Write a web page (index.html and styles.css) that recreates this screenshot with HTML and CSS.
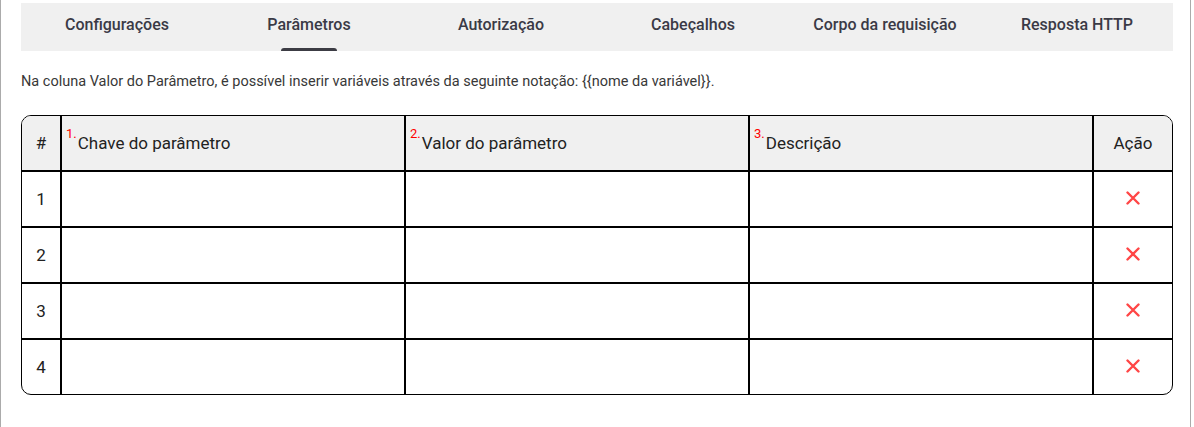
FILE: index.html
```html
<!DOCTYPE html>
<html lang="pt-BR">
<head>
    <meta charset="UTF-8">
    <meta name="viewport" content="width=device-width, initial-scale=1.0">
    <title>Parâmetros da requisição</title>
    <link rel="stylesheet" href="styles.css">
</head>
<body>

<div class="panel">
    <div class="tabs">
        <div class="tab">Configurações</div>
        <div class="tab active">Parâmetros</div>
        <div class="tab">Autorização</div>
        <div class="tab">Cabeçalhos</div>
        <div class="tab">Corpo da requisição</div>
        <div class="tab">Resposta HTTP</div>
    </div>

    <p class="note">Na coluna Valor do Parâmetro, é possível inserir variáveis através da seguinte notação: {{nome da variável}}.</p>

    <div class="table-wrap">
        <table class="params">
            <colgroup>
                <col class="col-num">
                <col class="col-text">
                <col class="col-text">
                <col class="col-text">
                <col class="col-action">
            </colgroup>
            <thead>
                <tr>
                    <th class="center">#</th>
                    <th><span class="order">1.</span>Chave do parâmetro</th>
                    <th><span class="order">2.</span>Valor do parâmetro</th>
                    <th><span class="order">3.</span>Descrição</th>
                    <th class="center">Ação</th>
                </tr>
            </thead>
            <tbody id="rows"></tbody>
        </table>
    </div>
</div>

<script>
    const rows = document.getElementById('rows');
    const removeIcon = '<svg width="14" height="14" viewBox="0 0 14 14"><path d="M1.5 1.5 L12.5 12.5 M12.5 1.5 L1.5 12.5" stroke="#ff4646" stroke-width="2.4" stroke-linecap="round"/></svg>';

    for (let i = 1; i <= 4; i++) {
        const tr = document.createElement('tr');
        tr.innerHTML = `<td class="center">${i}</td><td></td><td></td><td></td><td class="center"><span class="remove">${removeIcon}</span></td>`;
        rows.appendChild(tr);
    }
</script>

</body>
</html>
```

FILE: styles.css
```css
body {
    font-family: Roboto, "Noto Sans", sans-serif;
    margin: 0;
    background-color: #fff;
}
.panel {
    width: 1191px;
    height: 100vh;
    box-sizing: border-box;
    border-left: 1px solid #ababab;
    border-right: 1px solid #ababab;
    padding: 3px 17px 0 20px;
}
.tabs {
    display: grid;
    grid-template-columns: repeat(6, 1fr);
    background-color: #f0f0f0;
    height: 48px;
}
.tab {
    position: relative;
    text-align: center;
    padding-top: 12px;
    line-height: 20px;
    font-size: 16px;
    font-weight: 500;
    color: #3a3a46;
}
.tab.active::after {
    content: "";
    position: absolute;
    left: 50%;
    bottom: 0;
    width: 56px;
    height: 3px;
    margin-left: -28px;
    background-color: #3c3c44;
    border-radius: 3px 3px 0 0;
}
.note {
    margin: 21px 0 23px;
    font-size: 14.5px;
    line-height: 20px;
    color: #383838;
}
.table-wrap {
    border: 1px solid #000;
    border-radius: 10px;
    overflow: hidden;
}
.params {
    width: 100%;
    table-layout: fixed;
    border-collapse: separate;
    border-spacing: 0;
    font-size: 17px;
    color: #222;
}
.col-num {
    width: 40px;
}
.col-text {
    width: 344px;
}
.col-action {
    width: 78px;
}
.params th,
.params td {
    height: 56px;
    box-sizing: border-box;
    padding: 0 4px;
    border-right: 2px solid #000;
    border-bottom: 2px solid #000;
    text-align: left;
    font-weight: 400;
    vertical-align: middle;
}
.params th:last-child,
.params td:last-child {
    border-right: none;
}
.params tbody tr:last-child td {
    border-bottom: none;
    height: 54px;
}
.params th {
    background-color: #f0f0f0;
}
.params .order {
    color: #ff0000;
    font-size: 13px;
    vertical-align: 11px;
    line-height: 0;
    margin-right: 1px;
}
.params .center {
    text-align: center;
}
.remove {
    display: inline-block;
    line-height: 0;
    cursor: pointer;
}
```
